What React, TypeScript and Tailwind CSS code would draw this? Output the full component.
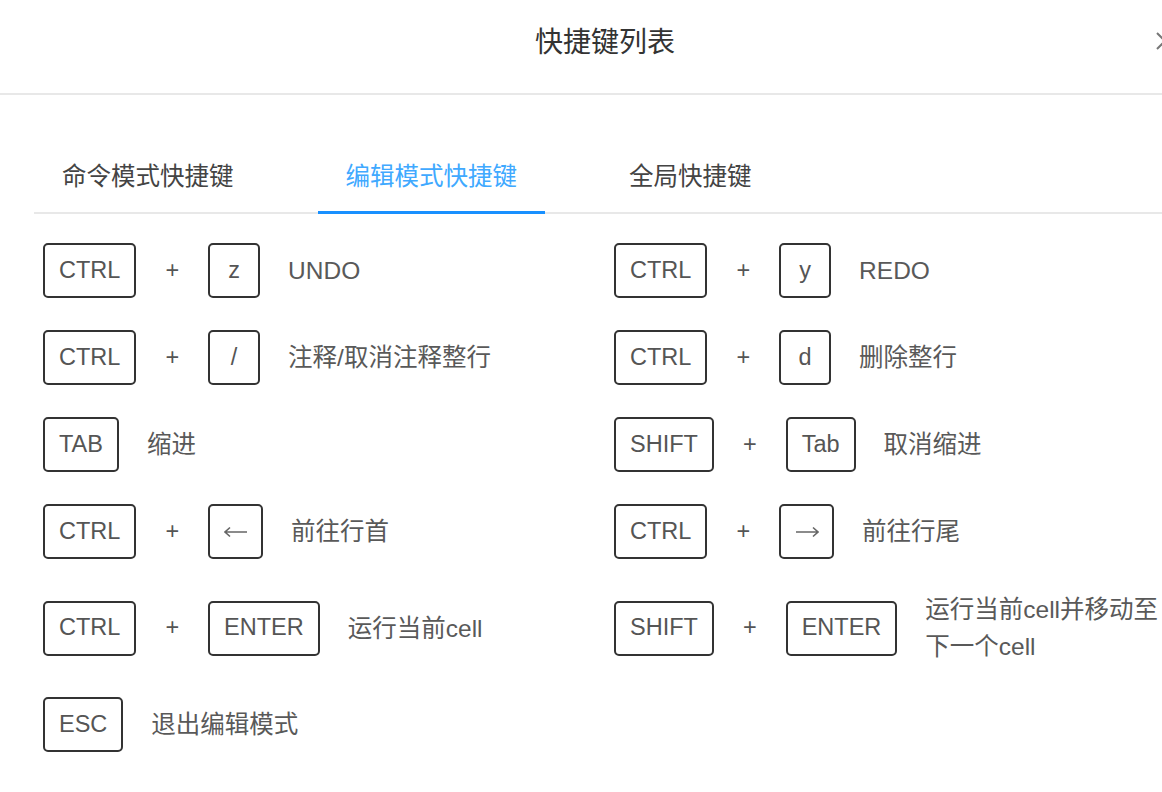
import React from 'react';

type Shortcut = {
  keys: string[];
  desc: React.ReactNode;
};

const leftItems: Shortcut[] = [
  { keys: ['CTRL', 'z'], desc: 'UNDO' },
  { keys: ['CTRL', '/'], desc: '注释/取消注释整行' },
  { keys: ['TAB'], desc: '缩进' },
  { keys: ['CTRL', '←'], desc: '前往行首' },
  { keys: ['CTRL', 'ENTER'], desc: '运行当前cell' },
  { keys: ['ESC'], desc: '退出编辑模式' },
];

const rightItems: Shortcut[] = [
  { keys: ['CTRL', 'y'], desc: 'REDO' },
  { keys: ['CTRL', 'd'], desc: '删除整行' },
  { keys: ['SHIFT', 'Tab'], desc: '取消缩进' },
  { keys: ['CTRL', '→'], desc: '前往行尾' },
  {
    keys: ['SHIFT', 'ENTER'],
    desc: (
      <>
        运行当前cell并移动至
        <br />
        下一个cell
      </>
    ),
  },
];

// thin long arrow like the reference glyph
const Arrow: React.FC<{ dir: 'left' | 'right' }> = ({ dir }) => (
  <svg width="24" height="12" viewBox="0 0 24 12" fill="none" stroke="#666" strokeWidth="1.6">
    {dir === 'left' ? (
      <path d="M1 6 H23 M6 1.5 L1 6 L6 10.5" />
    ) : (
      <path d="M1 6 H23 M18 1.5 L23 6 L18 10.5" />
    )}
  </svg>
);

const Key: React.FC<{ label: string }> = ({ label }) => {
  const arrow = label === '←' || label === '→';
  return (
    <div
      className={`h-[55px] border-2 border-[#333] rounded-[5px] flex items-center justify-center text-[23.5px] text-[#555] ${
        arrow ? 'w-[55px]' : 'min-w-[52px] px-[14px]'
      }`}
    >
      {arrow ? <Arrow dir={label === '←' ? 'left' : 'right'} /> : label}
    </div>
  );
};

const Row: React.FC<{ item?: Shortcut }> = ({ item }) => {
  if (!item) return <div />;
  return (
    <div className="flex items-center">
      {item.keys.map((k, i) => (
        <React.Fragment key={i}>
          {i > 0 && <span className="mx-[29px] text-[23.5px] text-[#555]">+</span>}
          <Key label={k} />
        </React.Fragment>
      ))}
      <div className="ml-[28px] text-[24.5px] leading-[37px] text-[#595959] whitespace-nowrap">
        {item.desc}
      </div>
    </div>
  );
};

const tabs = ['命令模式快捷键', '编辑模式快捷键', '全局快捷键'];

export default function App() {
  const active = 1;
  const rows = Math.max(leftItems.length, rightItems.length);

  return (
    <div
      className="w-[1162px] h-[792px] overflow-hidden bg-white relative"
      style={{ fontFamily: '"Liberation Sans", "Noto Sans CJK SC", sans-serif' }}
    >
      <div className="w-[1210px]">
        {/* header */}
        <header className="h-[95px] border-b-2 border-[#e8e8e8] flex items-center justify-center">
          <h1 className="text-[28px] leading-none text-[#333] pb-[8px]">快捷键列表</h1>
        </header>

        <div className="pl-[34px] pt-[38px]">
          {/* tabs */}
          <div className="flex border-b-2 border-[#e8e8e8]">
            {tabs.map((t, i) => (
              <div
                key={t}
                className={`relative px-[28px] pt-[25px] pb-[17px] mr-[56px] text-[24.5px] leading-[37px] ${
                  i === active ? 'text-[#40a9ff]' : 'text-[#444]'
                }`}
              >
                {t}
                {i === active && (
                  <span className="absolute left-0 right-0 -bottom-[2px] h-[3px] bg-[#1890ff]" />
                )}
              </div>
            ))}
          </div>

          {/* shortcuts */}
          <div className="grid grid-cols-[571px_1fr] pl-[9px] mt-[29px] gap-y-[32px]">
            {Array.from({ length: rows }).map((_, i) => (
              <React.Fragment key={i}>
                <Row item={leftItems[i]} />
                <Row item={rightItems[i]} />
              </React.Fragment>
            ))}
          </div>
        </div>
      </div>

      {/* close button, cut off at the edge */}
      <svg
        className="absolute left-[1155px] top-[31px]"
        width="20"
        height="20"
        viewBox="0 0 20 20"
        fill="none"
        stroke="#777"
        strokeWidth="2"
      >
        <path d="M2 2 L18 18 M18 2 L2 18" />
      </svg>
    </div>
  );
}
